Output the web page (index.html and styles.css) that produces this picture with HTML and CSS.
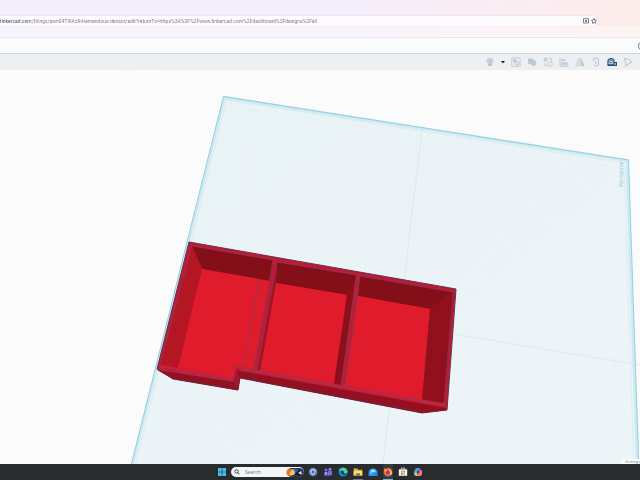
FILE: index.html
```
<!DOCTYPE html>
<html lang="en">
<head>
<meta charset="utf-8">
<meta name="viewport" content="width=device-width">
<title>Tinkercad</title>
<link rel="stylesheet" href="styles.css">
</head>
<body>
<header class="browser">
  <div class="address">
    <input class="url" type="text" aria-label="Address" value="tinkercad.com/things/awn04TI9AzR-tremendous-densor/edit?returnTo=https%3A%2F%2Fwww.tinkercad.com%2Fdashboard%2Fdesigns%2Fall">
    <button class="mini" aria-label="Reader view"><svg viewBox="0 0 6 6"><path d="M.5 .7h5v4.300h-5zM2 2l2 2M4 2L2 4" fill="none" stroke="#665f6d" stroke-width=".8"/></svg></button>
    <button class="mini" aria-label="Bookmark"><svg viewBox="0 0 6 6"><path d="M3 .5l.8 1.600 1.800.2-1.300 1.200.3 1.800L3 4.500l-1.600.8.3-1.800L.4 2.300l1.800-.2z" fill="none" stroke="#4d4654" stroke-width=".7"/></svg></button>
  </div>
</header>
<div class="titlebar">
  <button class="account" aria-label="Account"></button>
</div>
<nav class="toolbar" aria-label="Edit tools">
  <button aria-label="Show"><svg viewBox="0 0 10 10"><path d="M5 .7C2.900.7 1.500 2 1.500 3.800c0 1.300.8 2 1.500 2.900V9h4V6.700c.7-.9 1.500-1.600 1.500-2.900C8.500 2 7.100.7 5 .7z" fill="#c5d0d9"/><path d="M5 4v5M3 7.500h4" stroke="#aebbc5" stroke-width=".7"/></svg></button>
  <button class="caret" aria-label="Show options"><svg viewBox="0 0 4 4"><path d="M0 1h4L2 3.300z" fill="#111"/></svg></button>
  <button aria-label="Group"><svg viewBox="0 0 10 10"><path d="M.8.8h8.400v8.400H.8z" fill="none" stroke="#c3ccd4" stroke-width=".9"/><path d="M2 2h3.500v3.500H2z" fill="#c3ccd4"/><circle cx="6.200" cy="6.200" r="2" fill="#dfe5e9" stroke="#bac5ce" stroke-width=".8"/></svg></button>
  <button aria-label="Ungroup"><svg viewBox="0 0 10 10"><path d="M1 1.500h5.500v1.300A3 3 0 1 1 3.600 7H1z" fill="#bfc9d1"/></svg></button>
  <button aria-label="Intersect"><svg viewBox="0 0 10 10"><path d="M.7.7h3.800v3.800H.7z" fill="#c9d1d8"/><path d="M6 1.500h2.500V4M1.500 6v2.500H4" fill="none" stroke="#bcc7cf" stroke-width=".8"/><circle cx="7" cy="7" r="2.300" fill="none" stroke="#bcc7cf" stroke-width=".9"/></svg></button>
  <button aria-label="Align"><svg viewBox="0 0 10 10"><path d="M1 .7v8.500h8.500" fill="none" stroke="#b9c4cd" stroke-width=".9"/><path d="M2.300 2h4v2.300h-4zM2.300 5.300h6.500V8H2.300z" fill="#c3ccd4"/></svg></button>
  <button aria-label="Mirror"><svg viewBox="0 0 10 10"><path d="M3.900 1.500V8.700H.8zM6.100 1.500V8.700h3.100z" fill="#e7ebee" stroke="#bcc7cf" stroke-width=".7"/><path d="M6.100 1.500V8.700h3.100z" fill="#bcc7cf"/><path d="M5 .5v9" stroke="#bcc7cf" stroke-width=".6"/></svg></button>
  <button aria-label="Cruise"><svg viewBox="0 0 10 10"><path d="M2.500 4.500V2.500Q2.500 1 5 1T7.500 2.500V7.500Q7.500 9 5.500 9T3.500 7.500M4.700 7V3.500" fill="none" stroke="#bac5cd" stroke-width="1.100"/></svg></button>
  <button aria-label="Tape measure"><svg viewBox="0 0 10 10"><path d="M1 8V4C1 .8 7 .8 7 4v4z" fill="#bed0e0" stroke="#315b84" stroke-width="1.300"/><circle cx="4" cy="4.500" r="1.300" fill="#fff" stroke="#315b84" stroke-width=".9"/><path d="M1 8.300h8.500V5.700H7" fill="none" stroke="#244e78" stroke-width="1.300"/></svg></button>
  <button aria-label="Drag"><svg viewBox="0 0 10 10"><path d="M1.500 1.500Q5 1 9 4.800L5.500 6.800 2.800 9.200 3 6.300Z" fill="#edf1f3" stroke="#bdc7ce" stroke-width="1.100" stroke-linejoin="round"/></svg></button>
</nav>
<main class="workspace">
  <svg class="scene" viewBox="0 70 640 394" preserveAspectRatio="xMidYMid slice" role="img" aria-label="Red tray with three compartments on the workplane">
    <defs>
      <linearGradient id="plane" x1="0" y1="0" x2="1" y2="1"><stop offset="0" stop-color="#e9f2f4"/><stop offset="1" stop-color="#edf5f8"/></linearGradient>
      <pattern id="grid" width="9" height="9" patternUnits="userSpaceOnUse" patternTransform="matrix(.988 .155 -.13 .99 223 96)"><path d="M0 0h9M0 0v9" fill="none" stroke="#deedf1" stroke-width=".3"/></pattern>
    </defs>
    <path d="M224 96L628 160 639 470H130z" fill="url(#plane)"/>
    <path d="M224 96L628 160 639 470H130z" fill="url(#grid)"/>
    <path d="M422 129L389 410 383 464M206 293L640 365" fill="none" stroke="#d0dce0" stroke-width=".5"/>
    <path d="M131 470L224.500 97.500 627 160.500 637.500 470" fill="none" stroke="#cdeaf3" stroke-width="3"/>
    <path d="M130 470L223.500 96.500 628.500 160 639 470" fill="none" stroke="#8ccbdc" stroke-width=".9"/>
    <path d="M134 470L226.500 100 624 163 634 470" fill="none" stroke="#cae7ef" stroke-width=".5"/>
    <text class="plane-label" transform="translate(623 187) rotate(-90)">Workplane</text>

    <g stroke-linejoin="round">
      <path d="M189 242L456 289 447 410 422 413 240 378 238 390 173 379 157 369z" fill="#c31930" stroke="#5d3553" stroke-width="1"/>
      <path d="M157 370L234 382 237 370 240 371 446 408 447 410 422 413 240 378 238 390 173 379z" fill="#940f20"/>
      <path d="M237 371L240 378 238 390 234 383z" fill="#a51730"/>
      <path d="M192 246L273 260 270 281 202 269z" fill="#850f19"/>
      <path d="M192 246L202 269 177 373 160 367z" fill="#b41624"/>
      <path d="M202 269L270 281 254 369 236 366 233 379 177 372z" fill="#e01b2b"/>
      <path d="M277 262L357 275 347 295 276 283z" fill="#850f19"/>
      <path d="M276 283L347 295 334 384 260 371z" fill="#e01b2b"/>
      <path d="M277 262L276 283 260 371 257 370z" fill="#a21321"/>
      <path d="M356 275L347 295 334 384 341 385z" fill="#8d0f1b"/>
      <path d="M360 276L454 292 430 309 358 296z" fill="#850f19"/>
      <path d="M358 296L430 309 422 400 345 386z" fill="#e01b2b"/>
      <path d="M454 292L430 309 422 400 444 404z" fill="#92101c"/>
      <path d="M159 366L233 379M241 369L445 405" fill="none" stroke="#c9203a" stroke-width="3"/>
      <path d="M158 369L232 381 235 367 242 368 445 405" fill="none" stroke="#75486f" stroke-width=".7"/>
      <path d="M192 245L159 368M192 246L273 260 253 369M277 261L257 371M277 262L357 275 341 385M360 275L345 387M360 276L453 292 444 404M259 279L243 367" fill="none" stroke="#70456b" stroke-width=".7"/>
      <path d="M238 375L238 389M253 370l2 9M336 394l5-5M174 378L238 390M240 377L422 412" fill="none" stroke="#6b2946" stroke-width=".6"/>
    </g>
  </svg>
  <button class="settings">Settings</button>
</main>
<footer class="taskbar">
  <button aria-label="Start"><svg viewBox="0 0 10 10"><path d="M1 1h3.700v3.700H1zM5.300 1H9v3.700H5.300zM1 5.300h3.700V9H1zM5.300 5.300H9V9H5.300z" fill="#47bdf0"/></svg></button>
  <label class="search">
    <svg class="lens" viewBox="0 0 6 6"><circle cx="2.600" cy="2.400" r="1.700" fill="none" stroke="#222" stroke-width=".8"/><path d="M3.800 3.700l1.600 1.700" stroke="#222" stroke-width=".8"/></svg>
    <input type="text" placeholder="Search" aria-label="Search">
    <svg class="art" viewBox="0 0 18 9"><rect x="1" width="17" height="9" rx="4.500" fill="#233e70"/><circle cx="4" cy="4.500" r="3.500" fill="#d97535"/><path d="M3 7l3-6 4 1-2 5z" fill="#ffc247"/><path d="M9 7l4-6 4 7z" fill="#17171e"/><path d="M7 1l4 0 1 2-3 1z" fill="#2969bd"/><path d="M12 5l3-2 1 4z" fill="#e8ded4"/></svg>
  </label>
  <div class="apps">
    <button aria-label="Security"><svg viewBox="0 0 10 10"><circle cx="5" cy="5" r="4.300" fill="#6289bd"/><path d="M2.500 3L5 2l2.500 1c0 3-.8 4.300-2.500 5-1.700-.7-2.500-2-2.500-5z" fill="#c1d4e8"/><circle cx="5" cy="5" r="1.400" fill="#3d5f9c"/></svg></button>
    <button aria-label="Teams"><svg viewBox="0 0 10 10"><circle cx="3" cy="3" r="1.500" fill="#7374e7"/><circle cx="7" cy="2.300" r="1.500" fill="#8c83f1"/><path d="M1 5h4v4H1z" fill="#524bc5"/><path d="M5 4h4v4L5 9z" fill="#736be0"/><path d="M2 6h2M3 6v2" stroke="#fff" stroke-width=".7"/></svg></button>
    <button aria-label="Edge"><svg viewBox="0 0 10 10"><circle cx="5" cy="5" r="4.500" fill="#1684d0"/><path d="M.7 4C1.500-.5 9.500-.5 9.500 4.500 9.500 7 6 7 6 5.500 6 3 2 2.500.7 4z" fill="#4bd09a"/><path d="M3 4.200C4.500 3 6 4 5.700 5.500 6 7 8 7 9 6.500 7.500 8.500 3 8 3 4.200z" fill="#12375f"/></svg></button>
    <button aria-label="File Explorer" class="open"><svg viewBox="0 0 10 10"><path d="M.7 1.500h3.500l1 1.200h4V8.500H.7z" fill="#eeb52d"/><path d="M.7 4h8.600v4.500H.7z" fill="#ffdc68"/><path d="M3 6.500h4v2H3z" fill="#2e78b9"/></svg></button>
    <button aria-label="Outlook"><svg viewBox="0 0 10 10"><path d="M.7 3.500L5 .8l4.300 2.700V9H.7z" fill="#197ed1"/><path d="M2.500 2.500h5v3h-5z" fill="#9fdcff"/><path d="M.7 4l4.300 3 4.300-3V9H.7z" fill="#248fe7"/><path d="M2 5.500l2.500 2" stroke="#d8f2ff" stroke-width=".8"/></svg></button>
    <button aria-label="Firefox" class="active"><svg viewBox="0 0 10 10"><circle cx="5" cy="5.200" r="4.300" fill="#f45d36"/><path d="M5 .7c3 1.500 5 4.500 3.500 7L6 7.500C8 5 6.500 3 5 .7z" fill="#ffc545"/><path d="M1.500 1L4 3 6 4 4 5 1 4.500z" fill="#ff9836"/><circle cx="5" cy="5.500" r="1.900" fill="#7543b5"/></svg></button>
    <button aria-label="Store"><svg viewBox="0 0 10 10"><path d="M.8 2.300h8.400v6.500H.8z" fill="#eff3ef"/><path d="M3.300 2.500V1h3.400v1.500" fill="none" stroke="#d7e3e7" stroke-width=".8"/><path d="M3 3.800h1.800v1.800H3z" fill="#e88b5f"/><path d="M5.200 3.800H7v1.800H5.200z" fill="#72b66b"/><path d="M3 6h1.800v1.800H3z" fill="#539bd0"/><path d="M5.200 6H7v1.800H5.200z" fill="#e2b84e"/></svg></button>
    <button aria-label="Copilot"><svg viewBox="0 0 10 10"><path d="M3 1h3.500L4.800 6.500 3.500 8C1 8 .5 6 1 4.500z" fill="#39a7e2"/><path d="M6 1c1.500 0 1.500 2 2.200 2C10 3.500 9.500 6 8 9H4l1.500-5z" fill="#e25c9c"/><path d="M1 6l2.500-.5L5 9H3.500C1.500 9 1.500 8 1 6z" fill="#d6ca46"/><path d="M6 1l2 2-2.500.5z" fill="#4964da"/><path d="M8 5l1 1-1.500 3H5z" fill="#f6865c"/><circle cx="5" cy="5" r="1" fill="#292e36"/></svg></button>
  </div>
</footer>
</body>
</html>
```
FILE: styles.css
```
* { box-sizing: border-box; }
html, body { height: 100%; }
body {
  margin: 0;
  display: flex;
  flex-direction: column;
  overflow: hidden;
  background: #fbfbfb;
  font-family: "Open Sans", "Liberation Sans", sans-serif;
}
button, input { margin: 0; padding: 0; border: 0; background: none; font: inherit; }
button { display: block; flex: none; }
svg { display: block; }

.browser {
  padding: 16px 42px 11px 0;
  background: linear-gradient(90deg, #f3edfc 0%, #f4edfa 55%, #faedf3 78%, #fcece9 100%);
  border-bottom: 1px solid #ece4ec;
  box-shadow: inset 0 -11px 0 #ffffff66;
}
.address {
  display: flex;
  align-items: center;
  gap: 2px;
  height: 10px;
  padding-right: 1px;
  border-radius: 0 4px 4px 0;
  background: #fdfbfe;
  box-shadow: 0 0 1px #b9adbd;
}
.url {
  flex: 1;
  min-width: 0;
  height: 10px;
  font-family: Roboto, "Liberation Sans", sans-serif;
  font-size: 5px;
  line-height: 10px;
  color: transparent;
  background: linear-gradient(90deg, #46405c 30px, #7c7686 30px);
  background-clip: text;
}
.mini { width: 6px; height: 6px; }

.titlebar {
  display: flex;
  justify-content: flex-end;
  align-items: center;
  height: 15px;
  background: #fafbfb;
  overflow: hidden;
}
.account {
  width: 10px;
  height: 10px;
  margin-right: -8px;
  border: 1px solid #5685bd;
  border-radius: 50%;
}

.toolbar {
  display: flex;
  justify-content: flex-end;
  align-items: center;
  gap: 6px;
  height: 17px;
  padding-right: 7px;
  border-top: 1px solid #d2d5d8;
  background: linear-gradient(90deg, #eeeff2, #edf0f2);
}
.toolbar button { width: 10px; height: 10px; }
.toolbar .caret { width: 4px; height: 4px; }

.workspace { position: relative; flex: 1; min-height: 0; }
.scene { width: 100%; height: 100%; }
.plane-label { font-size: 5px; fill: #8fc5d6; }
.settings {
  position: absolute;
  right: 0;
  bottom: 0;
  padding-left: 4px;
  background: #fafcfc;
  color: #777f84;
  font-size: 4px;
  line-height: 5px;
  white-space: nowrap;
}

.taskbar {
  display: flex;
  justify-content: center;
  align-items: center;
  gap: 4px;
  height: 16px;
  background: #282c2f;
}
.taskbar button { width: 10px; height: 16px; padding: 3px 0; }
.taskbar .open { box-shadow: inset 0 -1px 0 #747b80; }
.taskbar .active { background: #383b3d; box-shadow: inset 0 -1px 0 #6db9e2; }
.apps { display: flex; gap: 5px; }
.search {
  display: flex;
  align-items: center;
  gap: 5px;
  width: 73px;
  height: 10px;
  padding-left: 3px;
  border-radius: 5px;
  background: #f4f5f6;
}
.search input { flex: 1; min-width: 0; height: 10px; font-size: 5px; line-height: 10px; }
.search input::placeholder { color: #70757a; opacity: 1; }
.lens { width: 6px; height: 6px; }
.art { width: 18px; height: 9px; }
```
